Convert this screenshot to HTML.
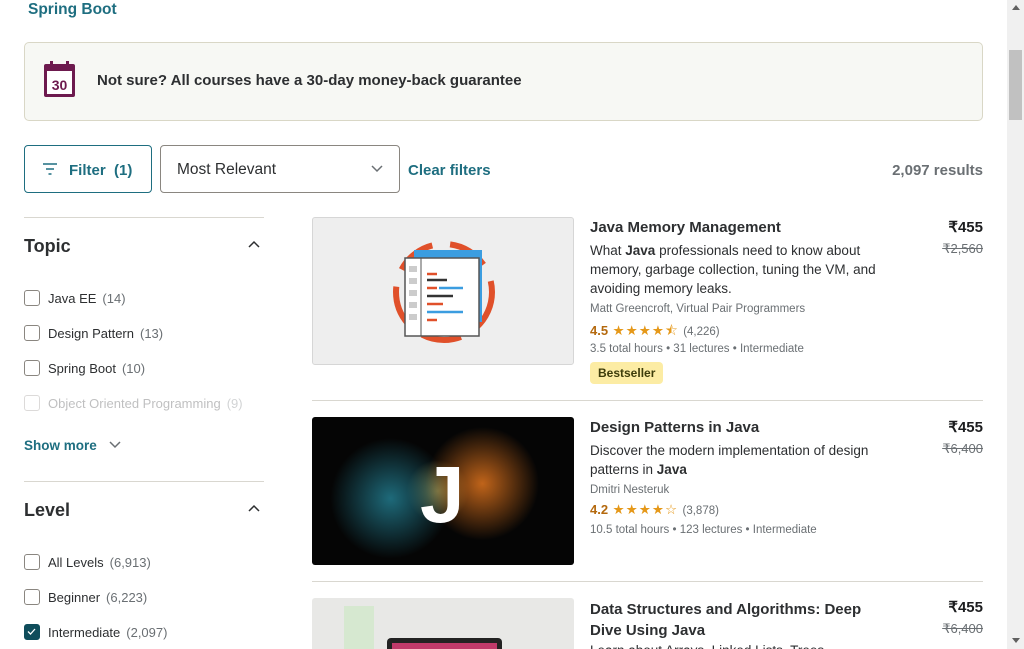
<!DOCTYPE html>
<html><head><meta charset="utf-8"><style>
*{box-sizing:border-box;margin:0;padding:0}
html,body{width:1024px;height:649px;overflow:hidden}
body{background:#fff;font-family:"Liberation Sans",sans-serif;color:#1c1d1f;position:relative}
.a{position:absolute;white-space:nowrap}
.teal{color:#1e6e80;font-weight:bold}
.cb{position:absolute;left:24px;width:16px;height:16px;border:1.5px solid #8a8680;border-radius:3px}
.lbl{position:absolute;left:48px;font-size:13px;color:#2d2f31}
.lbl span{color:#6a6f73;margin-left:6px}
.hr{position:absolute;height:1px;background:#d9d7d0}
.t{font-size:15px;font-weight:bold;color:#2d2f31}
.d{font-size:13.5px;color:#2d2f31;line-height:19px;white-space:normal;width:300px}
.s{font-size:11.5px;color:#6a6f73}
.r{color:#b4690e;font-weight:bold;font-size:13px}
.st{color:#e59819;font-size:13.5px;letter-spacing:1px}
.p{font-size:15px;font-weight:bold;right:41px;text-align:right}
.o{font-size:13px;color:#6a6f73;text-decoration:line-through;right:41px}
</style></head><body>
<div class="a teal" style="left:28px;top:1px;font-size:15.5px">Spring Boot</div>
<div class="a" style="left:24px;top:42px;width:959px;height:79px;background:#f7f8f4;border:1px solid #d9d7c6;border-radius:5px"></div>
<svg class="a" style="left:42px;top:60px" width="36" height="38" viewBox="0 0 36 38"><rect x="2" y="4" width="31" height="33" rx="2" fill="#6d1a4e"/><rect x="8" y="1" width="3" height="6" fill="#6d1a4e"/><rect x="24" y="1" width="3" height="6" fill="#6d1a4e"/><rect x="5" y="11" width="25" height="23" fill="#fff"/><text x="17.5" y="30" font-family="Liberation Sans" font-size="14" font-weight="bold" fill="#6d1a4e" text-anchor="middle">30</text></svg>
<div class="a" style="left:97px;top:72px;font-size:15px;font-weight:bold;color:#2d2f31">Not sure? All courses have a 30-day money-back guarantee</div>
<div class="a" style="left:24px;top:145px;width:128px;height:48px;border:1px solid #1e6e80;border-radius:4px"></div>
<svg class="a" style="left:42px;top:163px" width="16" height="12"><path d="M1 1h14M4 6h8M6.5 11h3" stroke="#1e6e80" stroke-width="1.6"/></svg>
<div class="a teal" style="left:69px;top:162px;font-size:15px">Filter&nbsp; (1)</div>
<div class="a" style="left:160px;top:145px;width:240px;height:48px;border:1px solid #8a8680;border-radius:4px"></div>
<div class="a" style="left:177px;top:161px;font-size:15.5px;color:#2d2f31">Most Relevant</div>
<svg class="a" style="left:371px;top:165px" width="12" height="8"><path d="M1 1l5 5 5-5" fill="none" stroke="#6a6f73" stroke-width="1.5"/></svg>
<div class="a teal" style="left:408px;top:162px;font-size:15px">Clear filters</div>
<div class="a" style="right:41px;top:162px;font-size:15px;font-weight:bold;color:#6a6f73">2,097 results</div>

<div class="hr" style="left:24px;top:217px;width:240px"></div>
<div class="a" style="left:24px;top:236px;font-size:18px;font-weight:bold;color:#2d2f31">Topic</div>
<svg class="a" style="left:248px;top:240px" width="12" height="8"><path d="M1 7l5-5 5 5" fill="none" stroke="#2d2f31" stroke-width="1.5"/></svg>
<div class="cb" style="top:290px"></div><div class="lbl" style="top:291px">Java EE<span>(14)</span></div>
<div class="cb" style="top:325px"></div><div class="lbl" style="top:326px">Design Pattern<span>(13)</span></div>
<div class="cb" style="top:360px"></div><div class="lbl" style="top:361px">Spring Boot<span>(10)</span></div>
<div class="cb" style="top:395px;opacity:.3"></div><div class="lbl" style="top:396px;opacity:.3">Object Oriented Programming<span>(9)</span></div>
<div class="a teal" style="left:24px;top:438px;font-size:13.5px">Show more</div>
<svg class="a" style="left:109px;top:441px" width="12" height="8"><path d="M1 1l5 5 5-5" fill="none" stroke="#6a6f73" stroke-width="1.5"/></svg>
<div class="hr" style="left:24px;top:481px;width:240px"></div>
<div class="a" style="left:24px;top:500px;font-size:18px;font-weight:bold;color:#2d2f31">Level</div>
<svg class="a" style="left:248px;top:504px" width="12" height="8"><path d="M1 7l5-5 5 5" fill="none" stroke="#2d2f31" stroke-width="1.5"/></svg>
<div class="cb" style="top:554px"></div><div class="lbl" style="top:555px">All Levels<span>(6,913)</span></div>
<div class="cb" style="top:589px"></div><div class="lbl" style="top:590px">Beginner<span>(6,223)</span></div>
<div class="cb" style="top:624px;background:#0f4d5b;border-color:#0f4d5b"><svg width="13" height="13" style="position:absolute;left:0;top:0"><path d="M3 6.5l2.5 2.5 4.5-5" fill="none" stroke="#fff" stroke-width="1.3"/></svg></div><div class="lbl" style="top:625px">Intermediate<span>(2,097)</span></div>

<div class="a" style="left:312px;top:217px;width:262px;height:148px;background:#eeeeee;border:1px solid #d6d6d6;border-radius:3px;overflow:hidden">
<svg width="262" height="148"><circle cx="131" cy="74" r="48" fill="none" stroke="#e0502a" stroke-width="6" stroke-dasharray="40 18"/><rect x="101" y="32" width="68" height="72" fill="#3b9de0"/><rect x="92" y="40" width="74" height="78" fill="#fff" stroke="#555" stroke-width="1.5"/><line x1="108" y1="40" x2="108" y2="118" stroke="#555"/><g fill="#ccc"><rect x="96" y="48" width="8" height="6"/><rect x="96" y="60" width="8" height="6"/><rect x="96" y="72" width="8" height="6"/><rect x="96" y="84" width="8" height="6"/><rect x="96" y="96" width="8" height="6"/></g><g stroke-width="2.5"><line x1="114" y1="56" x2="124" y2="56" stroke="#e0502a"/><line x1="114" y1="62" x2="134" y2="62" stroke="#333"/><line x1="114" y1="70" x2="124" y2="70" stroke="#e0502a"/><line x1="126" y1="70" x2="150" y2="70" stroke="#3b9de0"/><line x1="114" y1="78" x2="140" y2="78" stroke="#333"/><line x1="114" y1="86" x2="130" y2="86" stroke="#e0502a"/><line x1="114" y1="94" x2="150" y2="94" stroke="#3b9de0"/><line x1="114" y1="102" x2="124" y2="102" stroke="#e0502a"/></g></svg></div>
<div class="a t" style="left:590px;top:219px">Java Memory Management</div>
<div class="a d" style="left:590px;top:241px">What <b>Java</b> professionals need to know about memory, garbage collection, tuning the VM, and avoiding memory leaks.</div>
<div class="a s" style="left:590px;top:303px">Matt Greencroft, Virtual Pair Programmers</div>
<div class="a" style="left:590px;top:321px"><span class="r">4.5</span> <span class="st">★★★★⯪</span> <span class="s">(4,226)</span></div>
<div class="a s" style="left:590px;top:343px">3.5 total hours • 31 lectures • Intermediate</div>
<div class="a" style="left:590px;top:362px;background:#fceca4;border-radius:4px;font-size:12px;font-weight:bold;padding:4px 8px;color:#3d3c0a">Bestseller</div>
<div class="a p" style="top:218px">₹455</div>
<div class="a o" style="top:241px">₹2,560</div>
<div class="hr" style="left:312px;top:400px;width:671px"></div>

<div class="a" style="left:312px;top:417px;width:262px;height:148px;border-radius:3px;overflow:hidden;background:radial-gradient(circle at 30% 55%,#1e6a7a 0,transparent 30%),radial-gradient(circle at 65% 45%,#c0641a 0,transparent 30%),radial-gradient(circle at 48% 50%,#8a7a3a 0,transparent 20%),#050505">
<div class="a" style="left:108px;top:32px;font-size:80px;font-weight:bold;color:#fff">J</div></div>
<div class="a t" style="left:590px;top:419px">Design Patterns in Java</div>
<div class="a d" style="left:590px;top:441px">Discover the modern implementation of design patterns in <b>Java</b></div>
<div class="a s" style="left:590px;top:484px">Dmitri Nesteruk</div>
<div class="a" style="left:590px;top:501px"><span class="r">4.2</span> <span class="st">★★★★☆</span> <span class="s">(3,878)</span></div>
<div class="a s" style="left:590px;top:524px">10.5 total hours • 123 lectures • Intermediate</div>
<div class="a p" style="top:418px">₹455</div>
<div class="a o" style="top:441px">₹6,400</div>
<div class="hr" style="left:312px;top:581px;width:671px"></div>

<div class="a" style="left:312px;top:598px;width:262px;height:60px;background:#e8e8e6;border-radius:3px;overflow:hidden"><div class="a" style="left:75px;top:40px;width:115px;height:30px;background:#222;border-radius:4px"></div><div class="a" style="left:80px;top:45px;width:105px;height:25px;background:#c03a6a"></div><div class="a" style="left:32px;top:8px;width:30px;height:50px;background:#d6e8d0"></div></div>
<div class="a t" style="left:590px;top:599px;line-height:21px">Data Structures and Algorithms: Deep<br>Dive Using Java</div>
<div class="a d" style="left:590px;top:641px">Learn about Arrays, Linked Lists, Trees</div>
<div class="a p" style="top:598px">₹455</div>
<div class="a o" style="top:621px">₹6,400</div>

<div class="a" style="left:1007px;top:0;width:17px;height:649px;background:#f0f0f0"></div>
<div class="a" style="left:1009px;top:50px;width:13px;height:70px;background:#c1c1c1"></div>
<div class="a" style="left:1012px;top:5px;width:0;height:0;border-left:4px solid transparent;border-right:4px solid transparent;border-bottom:5px solid #606060"></div>
<div class="a" style="left:1012px;top:638px;width:0;height:0;border-left:4px solid transparent;border-right:4px solid transparent;border-top:5px solid #606060"></div>
</body></html>
